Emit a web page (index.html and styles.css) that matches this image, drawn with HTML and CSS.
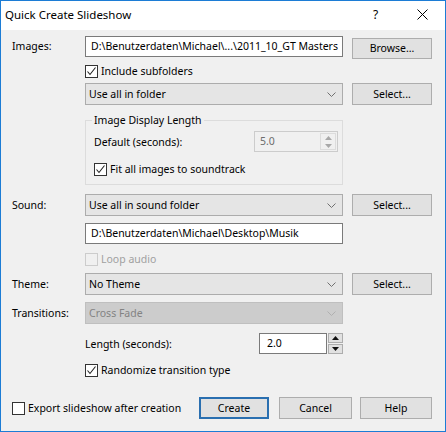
FILE: index.html
```html
<!DOCTYPE html>
<html>
<head>
<meta charset="utf-8">
<link rel="stylesheet" href="styles.css">
</head>
<body>
<div class="window">
  <div class="titlebar">
    <span class="title">Quick Create Slideshow</span>
    <span class="tb-help">?</span>
    <span class="tb-close"><svg width="11" height="11" viewBox="0 0 11 11"><path d="M0.5 0.5L10.5 10.5M10.5 0.5L0.5 10.5" stroke="#000" stroke-width="1" fill="none"/></svg></span>
  </div>
  <div class="content">
    <div class="row row-images">
      <span class="label">Images:</span>
      <div class="field">D:\Benutzerdaten\Michael\...\2011_10_GT Masters</div>
      <div class="btn btn-low">Browse...</div>
    </div>

    <div class="row row-check">
      <span></span>
      <label class="check"><span class="cb"><svg width="11" height="11" viewBox="0 0 11 11"><path d="M1.5 5.5L4 8.5L9.5 1.5" stroke="#222" stroke-width="1.1" fill="none"/></svg></span><span>Include subfolders</span></label>
    </div>

    <div class="row row-combo mt5">
      <span></span>
      <div class="combo"><span>Use all in folder</span><svg class="chev" width="9" height="5" viewBox="0 0 9 5"><path d="M0.5 0.5L4.5 4.5L8.5 0.5" stroke="#707070" fill="none"/></svg></div>
      <div class="btn">Select...</div>
    </div>

    <div class="row row-group">
      <span></span>
      <fieldset class="group">
        <legend>Image Display Length</legend>
        <div class="group-row">
          <span>Default (seconds):</span>
          <div class="spin spin-disabled">
            <div class="spin-field">5.0</div>
            <div class="spin-arrows">
              <svg width="7" height="4" viewBox="0 0 7 4"><path d="M0 4L3.5 0L7 4Z" fill="#a8a8a8"/></svg>
              <svg width="7" height="4" viewBox="0 0 7 4"><path d="M0 0L3.5 4L7 0Z" fill="#a8a8a8"/></svg>
            </div>
          </div>
        </div>
        <label class="check group-check"><span class="cb"><svg width="11" height="11" viewBox="0 0 11 11"><path d="M1.5 5.5L4 8.5L9.5 1.5" stroke="#222" stroke-width="1.1" fill="none"/></svg></span><span>Fit all images to soundtrack</span></label>
      </fieldset>
    </div>

    <div class="row row-combo mt9">
      <span class="label">Sound:</span>
      <div class="combo"><span>Use all in sound folder</span><svg class="chev" width="9" height="5" viewBox="0 0 9 5"><path d="M0.5 0.5L4.5 4.5L8.5 0.5" stroke="#707070" fill="none"/></svg></div>
      <div class="btn">Select...</div>
    </div>

    <div class="row row-field mt7">
      <span></span>
      <div class="field">D:\Benutzerdaten\Michael\Desktop\Musik</div>
    </div>

    <div class="row row-check mt9">
      <span></span>
      <label class="check disabled"><span class="cb"></span><span>Loop audio</span></label>
    </div>

    <div class="row row-combo mt7">
      <span class="label">Theme:</span>
      <div class="combo"><span>No Theme</span><svg class="chev" width="9" height="5" viewBox="0 0 9 5"><path d="M0.5 0.5L4.5 4.5L8.5 0.5" stroke="#707070" fill="none"/></svg></div>
      <div class="btn">Select...</div>
    </div>

    <div class="row row-combo mt7">
      <span class="label">Transitions:</span>
      <div class="combo combo-disabled"><span>Cross Fade</span><svg class="chev" width="9" height="5" viewBox="0 0 9 5"><path d="M0.5 0.5L4.5 4.5L8.5 0.5" stroke="#b0b0b0" fill="none"/></svg></div>
    </div>

    <div class="row row-field mt9">
      <span></span>
      <div class="length">
        <span>Length (seconds):</span>
        <div class="spin">
          <div class="spin-field">2.0</div>
          <div class="spin-btns">
            <div class="spin-btn"><svg width="7" height="4" viewBox="0 0 7 4"><path d="M0 4L3.5 0L7 4Z" fill="#111"/></svg></div>
            <div class="spin-btn"><svg width="7" height="4" viewBox="0 0 7 4"><path d="M0 0L3.5 4L7 0Z" fill="#111"/></svg></div>
          </div>
        </div>
      </div>
    </div>

    <div class="row row-check mt10">
      <span></span>
      <label class="check"><span class="cb"><svg width="11" height="11" viewBox="0 0 11 11"><path d="M1.5 5.5L4 8.5L9.5 1.5" stroke="#222" stroke-width="1.1" fill="none"/></svg></span><span>Randomize transition type</span></label>
    </div>

    <div class="bottom">
      <label class="check"><span class="cb"></span><span>Export slideshow after creation</span></label>
      <div class="btn btn-default">Create</div>
      <div class="btn btn-cancel">Cancel</div>
      <div class="btn btn-help">Help</div>
    </div>
  </div>
</div>
</body>
</html>
```

FILE: styles.css
```css
html, body {
  margin: 0;
  padding: 0;
  background: #f0f0f0;
}
body {
  font-family: "Noto Sans", "Liberation Sans", sans-serif;
  font-size: 10.5px;
  color: #000;
}
.window {
  width: 446px;
  height: 432px;
  box-sizing: border-box;
  border: 1px solid #1c7cd5;
  background: #f0f0f0;
  display: flex;
  flex-direction: column;
}
.titlebar {
  height: 29px;
  background: #fff;
  display: flex;
  align-items: center;
  padding-left: 4px;
  flex-shrink: 0;
}
.title {
  font-size: 11.5px;
  flex: 1;
  margin-top: -2px;
}
.tb-help {
  font-size: 12px;
  width: 10px;
  margin-right: 34px;
  margin-top: -2px;
}
.tb-close {
  display: flex;
  margin-right: 17px;
  margin-top: -3px;
}
.content {
  padding: 6px 0 0 11px;
  display: flex;
  flex-direction: column;
}
.row {
  display: grid;
  grid-template-columns: 64px 258px 80px;
  column-gap: 9px;
}
.label {
  line-height: 21px;
  white-space: nowrap;
}
.row-images {
  height: 23px;
  align-items: start;
}
.row-combo .label { line-height: 22px; }
.field {
  box-sizing: border-box;
  height: 21px;
  border: 1px solid #7a7a7a;
  background: #fff;
  padding-left: 5px;
  line-height: 19px;
  white-space: nowrap;
  overflow: hidden;
}
.btn {
  box-sizing: border-box;
  height: 22px;
  border: 1px solid #adadad;
  background: #e1e1e1;
  text-align: center;
  line-height: 20px;
}
.btn-low {
  margin-top: 2px;
  height: 21px;
  line-height: 19px;
}
.row-check {
  margin-top: 6px;
  height: 13px;
  align-items: center;
}
.check {
  display: flex;
  align-items: center;
  height: 13px;
  line-height: 13px;
  white-space: nowrap;
}
.cb {
  box-sizing: border-box;
  width: 13px;
  height: 13px;
  border: 1px solid #333;
  background: #fff;
  margin-right: 3px;
  display: flex;
  align-items: center;
  justify-content: center;
  flex-shrink: 0;
}
.check.disabled { color: #a0a0a0; }
.check.disabled .cb { border-color: #cccccc; background: #f0f0f0; }
.mt5 { margin-top: 5px; }
.mt7 { margin-top: 7px; }
.mt9 { margin-top: 9px; }
.mt10 { margin-top: 10px; }
.row-combo { height: 22px; }
.combo {
  box-sizing: border-box;
  height: 22px;
  border: 1px solid #acacac;
  background: #e5e5e5;
  display: flex;
  align-items: center;
  justify-content: space-between;
  padding: 0 5px 0 3px;
  white-space: nowrap;
}
.combo-disabled {
  background: #cccccc;
  border-color: #bfbfbf;
  color: #838383;
}
.chev { margin-right: 1px; }
.row-group { margin-top: 8px; }
.group {
  margin: 0;
  padding: 4px 4px 8px 8px;
  border: 1px solid #dcdcdc;
  min-width: 0;
}
.group legend {
  padding: 0 2px;
  margin-left: -2px;
  line-height: 14px;
}
.group-row {
  display: flex;
  align-items: center;
  justify-content: space-between;
  height: 21px;
}
.spin {
  display: flex;
  height: 21px;
}
.spin-disabled {
  box-sizing: border-box;
  border: 1px solid #cccccc;
  background: #f0f0f0;
  color: #6d6d6d;
  width: 84px;
}
.spin-disabled .spin-field {
  flex: 1;
  padding-left: 5px;
  line-height: 19px;
}
.spin-arrows {
  box-sizing: border-box;
  width: 16px;
  display: flex;
  flex-direction: column;
  align-items: center;
  justify-content: center;
  gap: 4px;
  margin: 1px 1px 1px 0;
  border: 1px solid #dcdcdc;
}
.group-check {
  margin-top: 11px;
}
.row-field { height: 21px; }
.length {
  display: flex;
  justify-content: space-between;
  align-items: center;
}
.length .spin { width: 84px; gap: 1px; }
.length .spin-field {
  box-sizing: border-box;
  width: 68px;
  height: 21px;
  border: 1px solid #7a7a7a;
  background: #fff;
  padding-left: 7px;
  line-height: 19px;
}
.spin-btns {
  display: flex;
  flex-direction: column;
  width: 15px;
  gap: 1px;
}
.spin-btn {
  box-sizing: border-box;
  height: 10px;
  border: 1px solid #adadad;
  background: #e1e1e1;
  display: flex;
  align-items: center;
  justify-content: center;
}
.bottom {
  margin-top: 20px;
  height: 22px;
  display: flex;
  align-items: center;
}
.bottom .check { width: 187px; }
.btn-default {
  width: 70px;
  border: 2px solid #2a6fb0;
  line-height: 18px;
}
.btn-cancel { width: 73px; margin-left: 10px; }
.btn-help { width: 72px; margin-left: 8px; }
```
